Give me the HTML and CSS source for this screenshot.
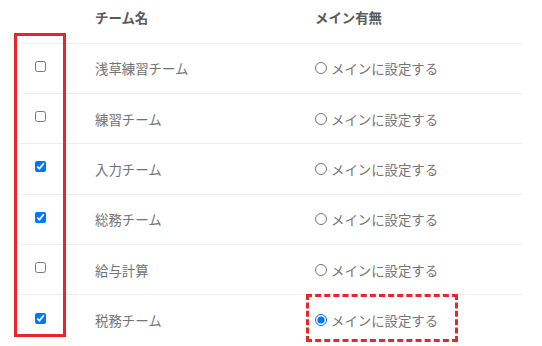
FILE: index.html
```html
<!DOCTYPE html>
<html lang="ja">
<head>
  <meta charset="UTF-8">
  <title>チーム設定</title>
  <link rel="stylesheet" href="styles.css">
</head>
<body>

  <div class="wrap">
    <table class="teams">
      <thead>
        <tr>
          <th class="col-check"></th>
          <th class="col-name">チーム名</th>
          <th class="col-main">メイン有無</th>
        </tr>
      </thead>
      <tbody>
        <tr>
          <td class="col-check"><input type="checkbox"></td>
          <td class="col-name">浅草練習チーム</td>
          <td class="col-main"><label class="main"><input type="radio" name="main">メインに設定する</label></td>
        </tr>
        <tr>
          <td class="col-check"><input type="checkbox"></td>
          <td class="col-name">練習チーム</td>
          <td class="col-main"><label class="main"><input type="radio" name="main">メインに設定する</label></td>
        </tr>
        <tr>
          <td class="col-check"><input type="checkbox" checked></td>
          <td class="col-name">入力チーム</td>
          <td class="col-main"><label class="main"><input type="radio" name="main">メインに設定する</label></td>
        </tr>
        <tr>
          <td class="col-check"><input type="checkbox" checked></td>
          <td class="col-name">総務チーム</td>
          <td class="col-main"><label class="main"><input type="radio" name="main">メインに設定する</label></td>
        </tr>
        <tr>
          <td class="col-check"><input type="checkbox"></td>
          <td class="col-name">給与計算</td>
          <td class="col-main"><label class="main"><input type="radio" name="main">メインに設定する</label></td>
        </tr>
        <tr>
          <td class="col-check"><input type="checkbox" checked></td>
          <td class="col-name">税務チーム</td>
          <td class="col-main"><label class="main"><input type="radio" name="main" checked>メインに設定する</label></td>
        </tr>
      </tbody>
    </table>

    <!-- annotation marks -->
    <div class="mark-checks"></div>
    <div class="mark-main"></div>
  </div>

</body>
</html>
```

FILE: styles.css
```css
body {
  margin: 0;
  background: #fff;
  font-family: "Noto Sans CJK JP", "Noto Sans", sans-serif;
  font-size: 13.4px;
  color: #747474;
}
.wrap {
  position: relative;
  width: 542px;
  height: 346px;
  overflow: hidden;
}
.teams {
  margin-left: 20px;
  width: 502px;
  border-collapse: collapse;
}
.teams th {
  height: 43px;
  padding: 0 0 9px 0;
  text-align: left;
  font-weight: bold;
  color: #5a5a5a;
  box-sizing: border-box;
}
.teams td {
  height: 50.4px;
  padding: 0;
  border-top: 1px solid #eceef2;
  box-sizing: border-box;
}
.col-check {
  width: 75px;
  padding-left: 15px !important;
}
.col-check input {
  display: block;
  margin: -4px 0 0 0;
  width: 11px;
  height: 11px;
}
.col-name {
  width: 220px;
}
.main {
  display: flex;
  align-items: center;
  gap: 4px;
}
.main input {
  margin: 0;
  width: 12px;
  height: 12px;
}
.mark-checks {
  position: absolute;
  left: 14px;
  top: 33px;
  width: 46px;
  height: 298px;
  border: 3.5px solid #e8262a;
}
.mark-main {
  position: absolute;
  left: 306px;
  top: 294px;
  width: 146px;
  height: 42px;
  border: 3.5px dashed #e8262a;
}
```
